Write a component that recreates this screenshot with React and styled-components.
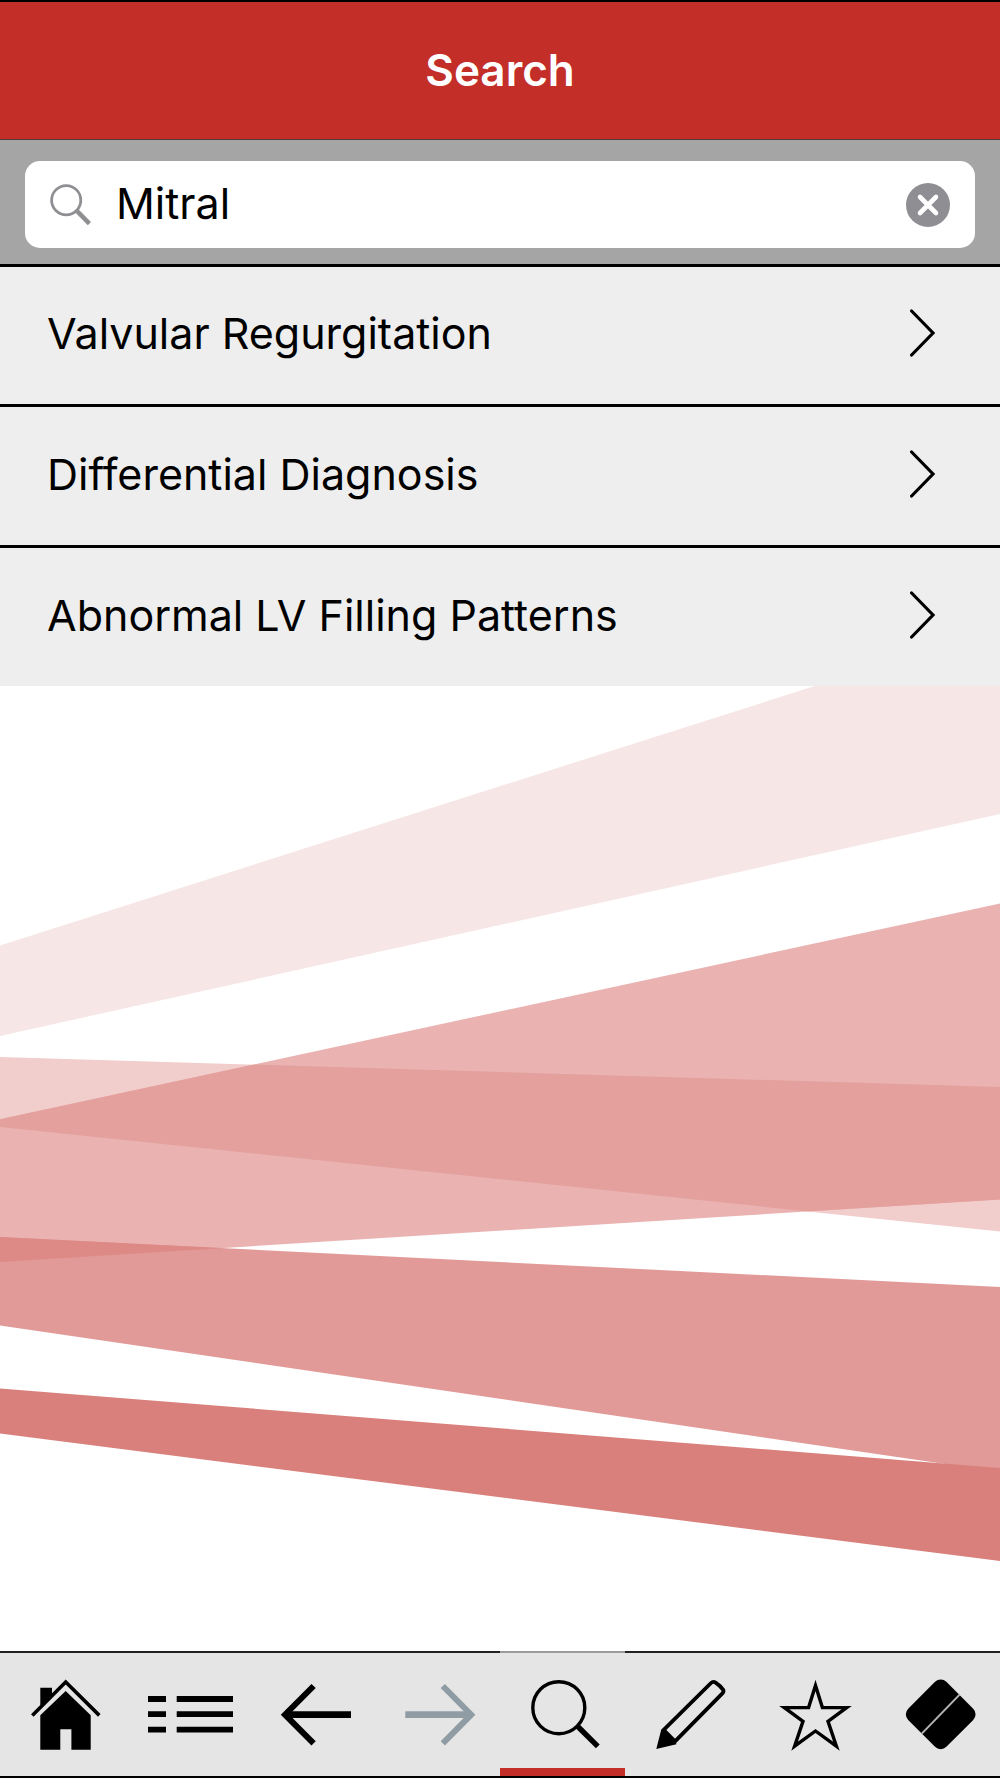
import React, { useRef, useState } from "react";
import styled, { createGlobalStyle } from "styled-components";

const results = [
  "Valvular Regurgitation",
  "Differential Diagnosis",
  "Abnormal LV Filling Patterns",
];

const HomeIcon = () => (
  <Glyph>
    <path d="M23.3 9.7H35V17.7L23.3 29.4Z" fill="#000" />
    <path d="M15.3 37.4L48.7 4L82.3 37.4" strokeWidth="3.6" />
    <path
      d="M48.7 13L73.7 37.3V71.7H54.4V51.3H43.3V71.7H23.3V37.3Z"
      fill="#000"
    />
  </Glyph>
);

const ListIcon = () => (
  <Glyph>
    <path
      d="M6 21H24M34.7 21H91M6 36.2H24M34.7 36.2H91M6 51.6H24M34.7 51.6H91"
      strokeWidth="5.8"
    />
  </Glyph>
);

const BackIcon = () => (
  <Glyph>
    <path d="M46.6 8L18 36.7L46.6 65.4" strokeWidth="6" />
    <path d="M19 36.7H84" strokeWidth="6.8" />
  </Glyph>
);

const ForwardIcon = () => (
  <Glyph $color="#909ca4">
    <path d="M50.8 8L79.2 36.7L50.8 65.4" strokeWidth="6" />
    <path d="M13.3 36.7H78" strokeWidth="6.8" />
  </Glyph>
);

const SearchIcon = () => (
  <Glyph>
    <circle cx="41.8" cy="29.7" r="26" strokeWidth="3.4" />
    <path d="M60.3 48L80.8 68.3" strokeWidth="5.4" />
  </Glyph>
);

const PencilIcon = () => (
  <Glyph>
    <path
      d="M21.2 52.4L69 5Q71 3 73.6 4.6Q78.4 7.8 81 11.6Q82.2 13.6 80.4 15.4L32.8 63.6"
      strokeWidth="3.8"
    />
    <path d="M14.3 71L19.4 51L24.4 52L32.8 60.6L34.4 66.2Z" fill="#000" />
  </Glyph>
);

const StarIcon = () => (
  <Glyph>
    <path
      d="M48.5 7.4L55.4 29.6H79.6L61 43.3L69.4 68.2L48.5 53L27.6 68.2L36 43.3L17.4 29.6H41.6Z"
      strokeWidth="3.4"
      strokeMiterlimit="10"
    />
  </Glyph>
);

const EraserIcon = () => (
  <Glyph>
    <rect
      x="21.7"
      y="9.3"
      width="54"
      height="54"
      rx="8"
      fill="#000"
      transform="rotate(45 48.7 36.3)"
    />
    <Slit d="M67.6 16.6L29.8 55.6" />
  </Glyph>
);

const tabs = [
  { name: "Home", Icon: HomeIcon },
  { name: "Contents", Icon: ListIcon },
  { name: "Back", Icon: BackIcon },
  { name: "Forward", Icon: ForwardIcon },
  { name: "Search", Icon: SearchIcon },
  { name: "Notes", Icon: PencilIcon },
  { name: "Favorites", Icon: StarIcon },
  { name: "Erase", Icon: EraserIcon },
];

const Backdrop = () => (
  <Bands viewBox="0 686 1000 965" preserveAspectRatio="none" aria-hidden="true">
    <clipPath id="middle">
      <path d="M0 1119.3L1000 903.5V1199.4L0 1262Z" />
    </clipPath>
    <path d="M0 945.5L1000 627V814L0 1036Z" fill="#f7e6e6" />
    <path d="M0 1057L1000 1087V1231.5L0 1127Z" fill="#f1cdcc" />
    <path d="M0 1119.3L1000 903.5V1199.4L0 1262Z" fill="#eab3b2" />
    <path d="M0 1237L1000 1287V1472L0 1325.5Z" fill="#e19a98" />
    {/* darker where the bands cross */}
    <g clipPath="url(#middle)">
      <path d="M0 1057L1000 1087V1231.5L0 1127Z" fill="#e4a09d" />
      <path d="M0 1237L1000 1287V1472L0 1325.5Z" fill="#dd8986" />
    </g>
    <path d="M0 1388.5L1000 1468V1561L0 1433.5Z" fill="#d9807c" />
  </Bands>
);

const App = () => {
  const [query, setQuery] = useState("Mitral");
  const [active, setActive] = useState("Search");
  const input = useRef(null);

  const clear = () => {
    setQuery("");
    input.current.focus();
  };

  return (
    <Page>
      <GlobalStyle />
      <Header>
        <Title>Search</Title>
      </Header>
      <SearchBar>
        <Field>
          <svg width="42" height="42" viewBox="0 0 42 42" fill="none" stroke="#8e8e93">
            <circle cx="16.2" cy="16.2" r="14.6" strokeWidth="2.8" />
            <path d="M26.6 26.6L39.4 39.6" strokeWidth="4.4" />
          </svg>
          <Input
            ref={input}
            type="text"
            aria-label="Search"
            value={query}
            onChange={(e) => setQuery(e.target.value)}
          />
          <Clear type="button" aria-label="Clear" onClick={clear}>
            <svg width="44" height="44" viewBox="0 0 44 44">
              <circle cx="22" cy="22" r="22" fill="#8e8e93" />
              <path
                d="M14 14L30 30M30 14L14 30"
                stroke="#fff"
                strokeWidth="4.6"
                strokeLinecap="round"
              />
            </svg>
          </Clear>
        </Field>
      </SearchBar>
      <Results>
        {results.map((result) => (
          <li key={result}>
            <Result href="#">
              <span>{result}</span>
              <svg width="26" height="48" viewBox="0 0 26 48" fill="none" stroke="#000">
                <path d="M1.6 2L23 24L1.6 46" strokeWidth="3.2" strokeLinecap="round" />
              </svg>
            </Result>
          </li>
        ))}
      </Results>
      <Backdrop />
      <TabBar>
        {tabs.map(({ name, Icon }) => (
          <Tab
            key={name}
            type="button"
            aria-label={name}
            $active={name === active}
            onClick={() => setActive(name)}
          >
            <Icon />
          </Tab>
        ))}
      </TabBar>
    </Page>
  );
};

const GlobalStyle = createGlobalStyle`
  * {
    box-sizing: border-box;
  }
  body {
    margin: 0;
    background: #fff;
    color: #000;
    font-family: Inter, "Liberation Sans", sans-serif;
  }
`;

const Page = styled.div`
  min-height: 100vh;
  display: flex;
  flex-direction: column;
`;

const Header = styled.header`
  height: 140px;
  padding-bottom: 2px;
  display: flex;
  align-items: center;
  justify-content: center;
  background: #c32e28;
  border-top: 2px solid #000;
  border-bottom: 1px solid #4d3a39;
`;

const Title = styled.h1`
  margin: 0;
  font-size: 44px;
  font-weight: 600;
  line-height: 52px;
  color: #fff;
`;

const SearchBar = styled.div`
  padding: 21px 25px 16px;
  background: #a5a5a5;
`;

const Field = styled.div`
  height: 87px;
  padding: 0 25px;
  display: flex;
  align-items: center;
  gap: 24px;
  background: #fff;
  border-radius: 15px;
`;

const Input = styled.input`
  flex: 1;
  min-width: 0;
  padding: 0 0 4px;
  border: 0;
  outline: none;
  background: none;
  color: #000;
  font-family: inherit;
  font-size: 43px;
  line-height: 52px;
`;

const Clear = styled.button`
  display: flex;
  padding: 0;
  border: 0;
  background: none;
  cursor: pointer;
`;

const Results = styled.ul`
  margin: 0;
  padding: 0;
  list-style: none;
`;

const Result = styled.a`
  height: 141px;
  padding: 0 64px 5px 47px;
  display: flex;
  align-items: center;
  justify-content: space-between;
  background: #eee;
  border-top: 3px solid #000;
  color: #000;
  font-size: 43px;
  line-height: 52px;
  text-decoration: none;

  li:first-child & {
    height: 140px;
  }
`;

const Bands = styled.svg`
  display: block;
  flex: 1;
  width: 100%;
  min-height: 0;
`;

const TabBar = styled.nav`
  height: 127px;
  display: grid;
  grid-template-columns: repeat(8, 1fr);
  background: #e5e5e5;
  border-bottom: 2px solid #000;
`;

const Tab = styled.button`
  padding: 0 0 0 6px;
  display: flex;
  align-items: center;
  justify-content: center;
  border: 0;
  border-top: 2px solid ${({ $active }) => ($active ? "#9c9c9c" : "#222")};
  background: none;
  box-shadow: ${({ $active }) => ($active ? "inset 0 -8px #c32e28" : "none")};
  cursor: pointer;
`;

const Glyph = styled.svg.attrs({
  width: 97,
  height: 73,
  viewBox: "0 0 97 73",
  fill: "none",
})`
  flex-shrink: 0;
  stroke: ${({ $color }) => $color || "#000"};

  [fill] {
    stroke: none;
  }
`;

const Slit = styled.path`
  stroke: #b4b4b4;
  stroke-width: 2px;
`;

export default App;
